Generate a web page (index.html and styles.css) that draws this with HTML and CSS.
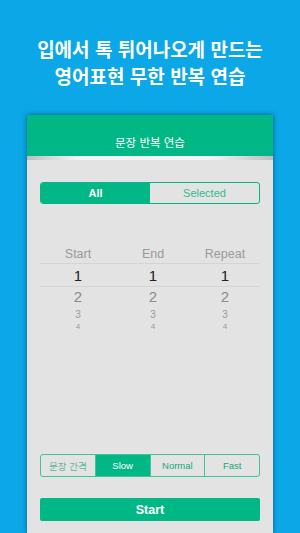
FILE: index.html
```html
<!DOCTYPE html>
<html lang="ko">
<head>
    <meta charset="UTF-8" />
    <title>문장 반복 연습</title>
    <link rel="stylesheet" href="styles.css">
</head>
<body>
    <h1 class="promo">입에서 톡 튀어나오게 만드는<br>영어표현 무한 반복 연습</h1>

    <div class="phone">
        <div class="nav">문장 반복 연습</div>
        <div class="nav-shade"></div>

        <div class="screen">
            <div class="tabs">
                <div class="tab active">All</div>
                <div class="tab">Selected</div>
            </div>

            <div class="picker">
                <div class="picker-head">
                    <span>Start</span><span>End</span><span>Repeat</span>
                </div>
                <div class="picker-row current">
                    <span>1</span><span>1</span><span>1</span>
                </div>
                <div class="picker-row second">
                    <span>2</span><span>2</span><span>2</span>
                </div>
                <div class="picker-row third">
                    <span>3</span><span>3</span><span>3</span>
                </div>
                <div class="picker-row fourth">
                    <span>4</span><span>4</span><span>4</span>
                </div>
            </div>

            <div class="speed">
                <div class="speed-cell label">문장 간격</div>
                <div class="speed-cell active">Slow</div>
                <div class="speed-cell">Normal</div>
                <div class="speed-cell">Fast</div>
            </div>

            <button class="start-btn">Start</button>
        </div>
    </div>
</body>
</html>
```

FILE: styles.css
```css
html, body {
    margin: 0;
    height: 100%;
}

body {
    background: #0ba7e7;
    font-family: "Liberation Sans", "Noto Sans CJK KR", sans-serif;
    overflow: hidden;
    display: flex;
    flex-direction: column;
    align-items: center;
}

.promo {
    margin: 35px 0 0;
    color: white;
    font-family: "Noto Sans CJK KR", sans-serif;
    font-size: 19px;
    font-weight: bold;
    line-height: 27px;
    text-align: center;
}

.phone {
    margin-top: 26px;
    width: 246px;
    flex: 1;
    background: #e3e3e3;
    box-shadow: 0 0 5px rgba(0,0,0,0.45);
    display: flex;
    flex-direction: column;
}

.nav {
    background: #01b785;
    height: 41px;
    color: white;
    font-family: "Noto Sans CJK KR", sans-serif;
    font-size: 11.5px;
    display: flex;
    align-items: flex-end;
    justify-content: center;
    padding-bottom: 6px;
    box-sizing: border-box;
}

.nav-shade {
    height: 4px;
    background: linear-gradient(to right, #bdbdbd, #f4f4f4 20%, #f4f4f4 75%, #bdbdbd);
}

.screen {
    display: flex;
    flex-direction: column;
    padding: 22px 13px 0 13px;
}

.tabs {
    display: flex;
    height: 22px;
    border: 1px solid #01b785;
    border-radius: 3px;
    overflow: hidden;
    box-sizing: border-box;
}

.tab {
    flex: 1;
    display: flex;
    align-items: center;
    justify-content: center;
    font-size: 11px;
    color: #2dbd8e;
}

.tab.active {
    background: #01b785;
    color: white;
    font-weight: bold;
}

.picker {
    margin-top: 43px;
    color: #9a9a9a;
}

.picker-head, .picker-row {
    display: grid;
    grid-template-columns: 76px 74px 70px;
    text-align: center;
}

.picker-head {
    font-size: 12.5px;
    padding-bottom: 2px;
    border-bottom: 1px solid #d4d4d4;
}

.picker-row.current {
    font-size: 15px;
    color: #222;
    height: 22px;
    line-height: 23px;
    border-bottom: 1px solid #d4d4d4;
}

.picker-row.second {
    font-size: 15px;
    color: #8a8a8a;
    line-height: 20px;
}

.picker-row.third {
    font-size: 10px;
    line-height: 13px;
    margin-top: 1px;
}

.picker-row.fourth {
    font-size: 8px;
    line-height: 11px;
}

.speed {
    margin-top: 122px;
    display: flex;
    height: 23px;
    border: 1px solid #42c49a;
    border-radius: 3px;
    overflow: hidden;
    box-sizing: border-box;
}

.speed-cell {
    flex: 1;
    display: flex;
    align-items: center;
    justify-content: center;
    font-size: 9.5px;
    color: #14a97c;
    border-left: 1px solid #42c49a;
}

.speed-cell.label {
    border-left: none;
    font-family: "Noto Sans CJK KR", sans-serif;
    color: #59b896;
}

.speed-cell.active {
    background: #01b785;
    color: white;
}

.start-btn {
    margin-top: 21px;
    height: 23px;
    border: none;
    border-radius: 2px;
    background: #01b785;
    color: white;
    font-family: "Liberation Sans", sans-serif;
    font-size: 12.5px;
    font-weight: bold;
    padding: 0;
}
```
